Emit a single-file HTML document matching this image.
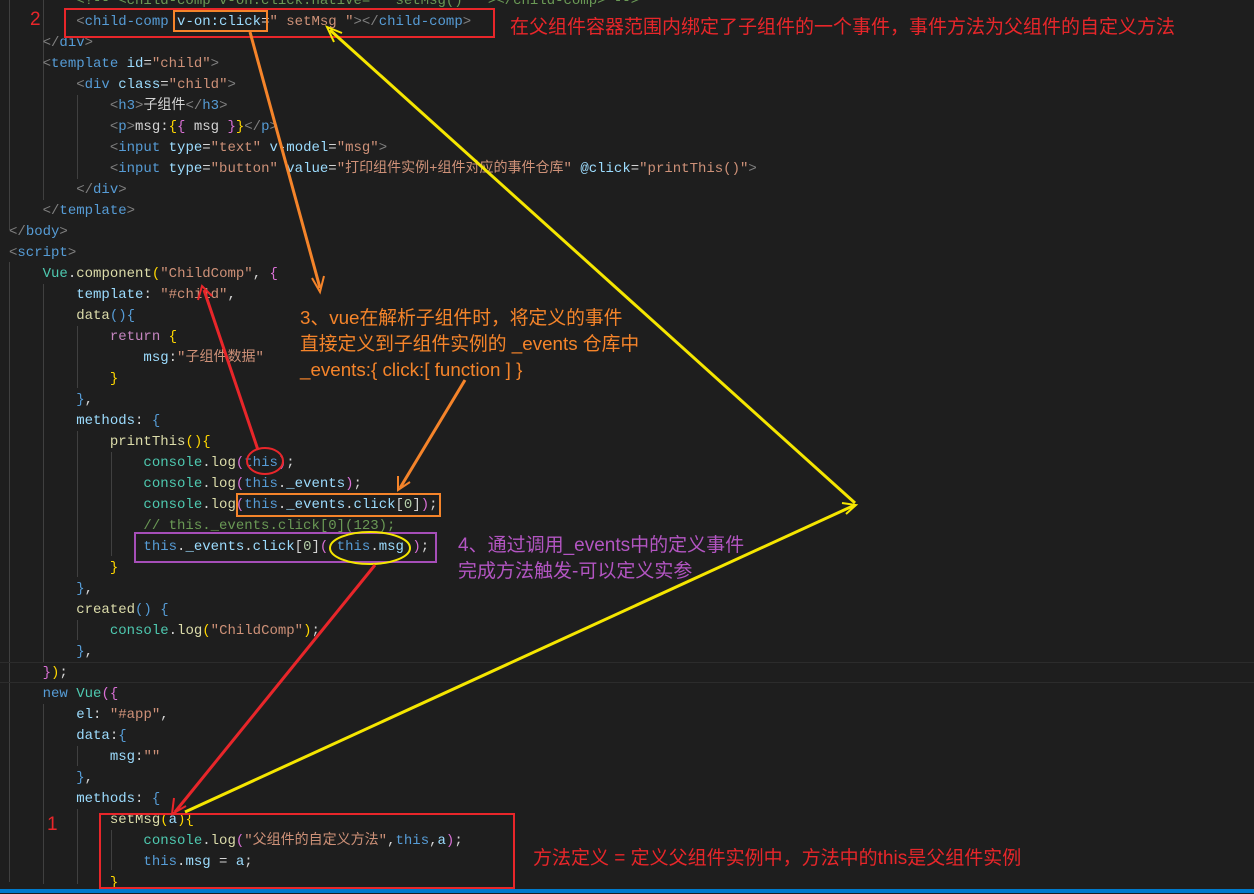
<!DOCTYPE html>
<html><head><meta charset="utf-8"><style>
body{margin:0;width:1254px;height:893px;background:#1e1e1e;overflow:hidden;position:relative;font-family:"Liberation Mono","Noto Sans CJK SC",monospace;}
.c{position:absolute;left:9px;top:-9px;font-size:14px;line-height:21px;white-space:pre;color:#d4d4d4;}
.g{color:#808080}.t{color:#569cd6}.a{color:#9cdcfe}.s{color:#ce9178}.y{color:#ffd700}.p{color:#da70d6}.f{color:#dcdcaa}.k{color:#4ec9b0}.m{color:#6a9955}.r{color:#c586c0}.n{color:#b5cea8}
.ann{position:absolute;font-family:"Liberation Sans","Noto Sans CJK SC",sans-serif;white-space:nowrap;}
.guide{position:absolute;width:1px;background:#404040;}
</style></head><body>
<div class="guide" style="left:9px;top:0;height:230px"></div>
<div class="guide" style="left:43px;top:0;height:200px"></div>
<div class="guide" style="left:77px;top:95px;height:84px"></div>
<div class="guide" style="left:9px;top:262px;height:620px"></div>
<div class="guide" style="left:43px;top:284px;height:378px"></div>
<div class="guide" style="left:77px;top:326px;height:62px"></div>
<div class="guide" style="left:77px;top:431px;height:146px"></div>
<div class="guide" style="left:111px;top:452px;height:104px"></div>
<div class="guide" style="left:77px;top:620px;height:20px"></div>
<div class="guide" style="left:43px;top:704px;height:180px"></div>
<div class="guide" style="left:77px;top:746px;height:20px"></div>
<div class="guide" style="left:77px;top:809px;height:75px"></div>
<div class="guide" style="left:111px;top:830px;height:40px"></div>
<div style="position:absolute;left:0;top:662px;width:1254px;height:21px;border-top:1px solid #2c2c2c;border-bottom:1px solid #2c2c2c;box-sizing:border-box"></div>
<div class="c"><span class="m">        &lt;!-- &lt;child-comp v-on:click.native="  setMsg()  "&gt;&lt;/child-comp&gt; --&gt;</span>
<span class="g">        &lt;</span><span class="t">child-comp</span> <span class="a">v-on:click</span>=<span class="s">" setMsg "</span><span class="g">&gt;&lt;/</span><span class="t">child-comp</span><span class="g">&gt;</span>
<span class="g">    &lt;/</span><span class="t">div</span><span class="g">&gt;</span>
<span class="g">    &lt;</span><span class="t">template</span> <span class="a">id</span>=<span class="s">"child"</span><span class="g">&gt;</span>
<span class="g">        &lt;</span><span class="t">div</span> <span class="a">class</span>=<span class="s">"child"</span><span class="g">&gt;</span>
<span class="g">            &lt;</span><span class="t">h3</span><span class="g">&gt;</span>子组件<span class="g">&lt;/</span><span class="t">h3</span><span class="g">&gt;</span>
<span class="g">            &lt;</span><span class="t">p</span><span class="g">&gt;</span>msg:<span class="y">{</span><span class="p">{</span> msg <span class="p">}</span><span class="y">}</span><span class="g">&lt;/</span><span class="t">p</span><span class="g">&gt;</span>
<span class="g">            &lt;</span><span class="t">input</span> <span class="a">type</span>=<span class="s">"text"</span> <span class="a">v-model</span>=<span class="s">"msg"</span><span class="g">&gt;</span>
<span class="g">            &lt;</span><span class="t">input</span> <span class="a">type</span>=<span class="s">"button"</span> <span class="a">value</span>=<span class="s">"打印组件实例+组件对应的事件仓库"</span> <span class="a">@click</span>=<span class="s">"printThis()"</span><span class="g">&gt;</span>
<span class="g">        &lt;/</span><span class="t">div</span><span class="g">&gt;</span>
<span class="g">    &lt;/</span><span class="t">template</span><span class="g">&gt;</span>
<span class="g">&lt;/</span><span class="t">body</span><span class="g">&gt;</span>
<span class="g">&lt;</span><span class="t">script</span><span class="g">&gt;</span>
    <span class="k">Vue</span>.<span class="f">component</span><span class="y">(</span><span class="s">"ChildComp"</span>, <span class="p">{</span>
        <span class="a">template</span>: <span class="s">"#child"</span>,
        <span class="f">data</span><span class="t">(){</span>
            <span class="r">return</span> <span class="y">{</span>
                <span class="a">msg</span>:<span class="s">"子组件数据"</span>
            <span class="y">}</span>
        <span class="t">}</span>,
        <span class="a">methods</span>: <span class="t">{</span>
            <span class="f">printThis</span><span class="y">(){</span>
                <span class="k">console</span>.<span class="f">log</span><span class="p">(</span><span class="t">this</span><span class="p">)</span>;
                <span class="k">console</span>.<span class="f">log</span><span class="p">(</span><span class="t">this</span>.<span class="a">_events</span><span class="p">)</span>;
                <span class="k">console</span>.<span class="f">log</span><span class="p">(</span><span class="t">this</span>.<span class="a">_events</span>.<span class="a">click</span>[<span class="n">0</span>]<span class="p">)</span>;
<span class="m">                // this._events.click[0](123);</span>
                <span class="t">this</span>.<span class="a">_events</span>.<span class="a">click</span>[<span class="n">0</span>]<span class="p">(</span> <span class="t">this</span>.<span class="a">msg</span> <span class="p">)</span>;
            <span class="y">}</span>
        <span class="t">}</span>,
        <span class="f">created</span><span class="t">()</span> <span class="t">{</span>
            <span class="k">console</span>.<span class="f">log</span><span class="y">(</span><span class="s">"ChildComp"</span><span class="y">)</span>;
        <span class="t">}</span>,
    <span class="p">}</span><span class="y">)</span>;
    <span class="t">new</span> <span class="k">Vue</span><span class="p">({</span>
        <span class="a">el</span>: <span class="s">"#app"</span>,
        <span class="a">data</span>:<span class="t">{</span>
            <span class="a">msg</span>:<span class="s">""</span>
        <span class="t">}</span>,
        <span class="a">methods</span>: <span class="t">{</span>
            <span class="f">setMsg</span><span class="y">(</span><span class="a">a</span><span class="y">){</span>
                <span class="k">console</span>.<span class="f">log</span><span class="p">(</span><span class="s">"父组件的自定义方法"</span>,<span class="t">this</span>,<span class="a">a</span><span class="p">)</span>;
                <span class="t">this</span>.<span class="a">msg</span> = <span class="a">a</span>;
            <span class="y">}</span></div>
<div style="position:absolute;left:0;top:889px;width:1254px;height:4px;background:#007acc"></div>
<div class="ann" style="left:30px;top:9px;color:#e8262a;font-size:19px">2</div>
<div class="ann" style="left:47px;top:814px;color:#e8262a;font-size:19px">1</div>
<div class="ann" style="left:510px;top:12px;color:#e8262a;font-size:19px">在父组件容器范围内绑定了子组件的一个事件，事件方法为父组件的自定义方法</div>
<div class="ann" style="left:300px;top:305px;color:#f5842a;font-size:18.8px;line-height:26px">3、vue在解析子组件时，将定义的事件<br>直接定义到子组件实例的 _events 仓库中<br>_events:{ click:[ function ] }</div>
<div class="ann" style="left:458px;top:533px;color:#b355c2;font-size:19px;line-height:26px">4、通过调用_events中的定义事件<br>完成方法触发-可以定义实参</div>
<div class="ann" style="left:533px;top:843px;color:#e8262a;font-size:19px">方法定义 = 定义父组件实例中，方法中的this是父组件实例</div>
<svg width="1254" height="893" style="position:absolute;left:0;top:0" fill="none">
<rect x="65" y="9" width="429" height="28" stroke="#e8262a" stroke-width="2"/>
<rect x="174" y="11" width="93" height="20" stroke="#f5842a" stroke-width="2"/>
<rect x="237" y="494" width="203" height="22" stroke="#f5842a" stroke-width="2"/>
<rect x="135" y="533" width="301" height="29" stroke="#a64eb8" stroke-width="2"/>
<rect x="100" y="814" width="414" height="74" stroke="#e8262a" stroke-width="2"/>
<ellipse cx="265" cy="461" rx="18" ry="13" stroke="#e8262a" stroke-width="2"/>
<ellipse cx="370" cy="548" rx="40" ry="16" stroke="#f5e600" stroke-width="2"/>
<g stroke-width="3">
<line x1="250" y1="32" x2="320" y2="288" stroke="#f5842a"/>
<path d="M312 278 L320 292 L324 276" stroke="#f5842a" stroke-width="2"/>
<line x1="465" y1="380" x2="400" y2="488" stroke="#f5842a"/>
<path d="M398 476 L398 490 L410 482" stroke="#f5842a" stroke-width="2"/>
<line x1="258" y1="450" x2="204" y2="290" stroke="#e8262a"/>
<path d="M198 300 L202 286 L212 296" stroke="#e8262a" stroke-width="2"/>
<line x1="375" y1="565" x2="175" y2="812" stroke="#e8262a"/>
<path d="M174 798 L172 814 L186 806" stroke="#e8262a" stroke-width="2"/>
<line x1="855" y1="503" x2="330" y2="30" stroke="#f5e600"/>
<path d="M334 42 L327 27 L342 33" stroke="#f5e600" stroke-width="2"/>
<line x1="185" y1="812" x2="855" y2="505" stroke="#f5e600"/>
<path d="M842 503 L856 505 L846 514" stroke="#f5e600" stroke-width="2"/>
</g>
</svg>
</body></html>
